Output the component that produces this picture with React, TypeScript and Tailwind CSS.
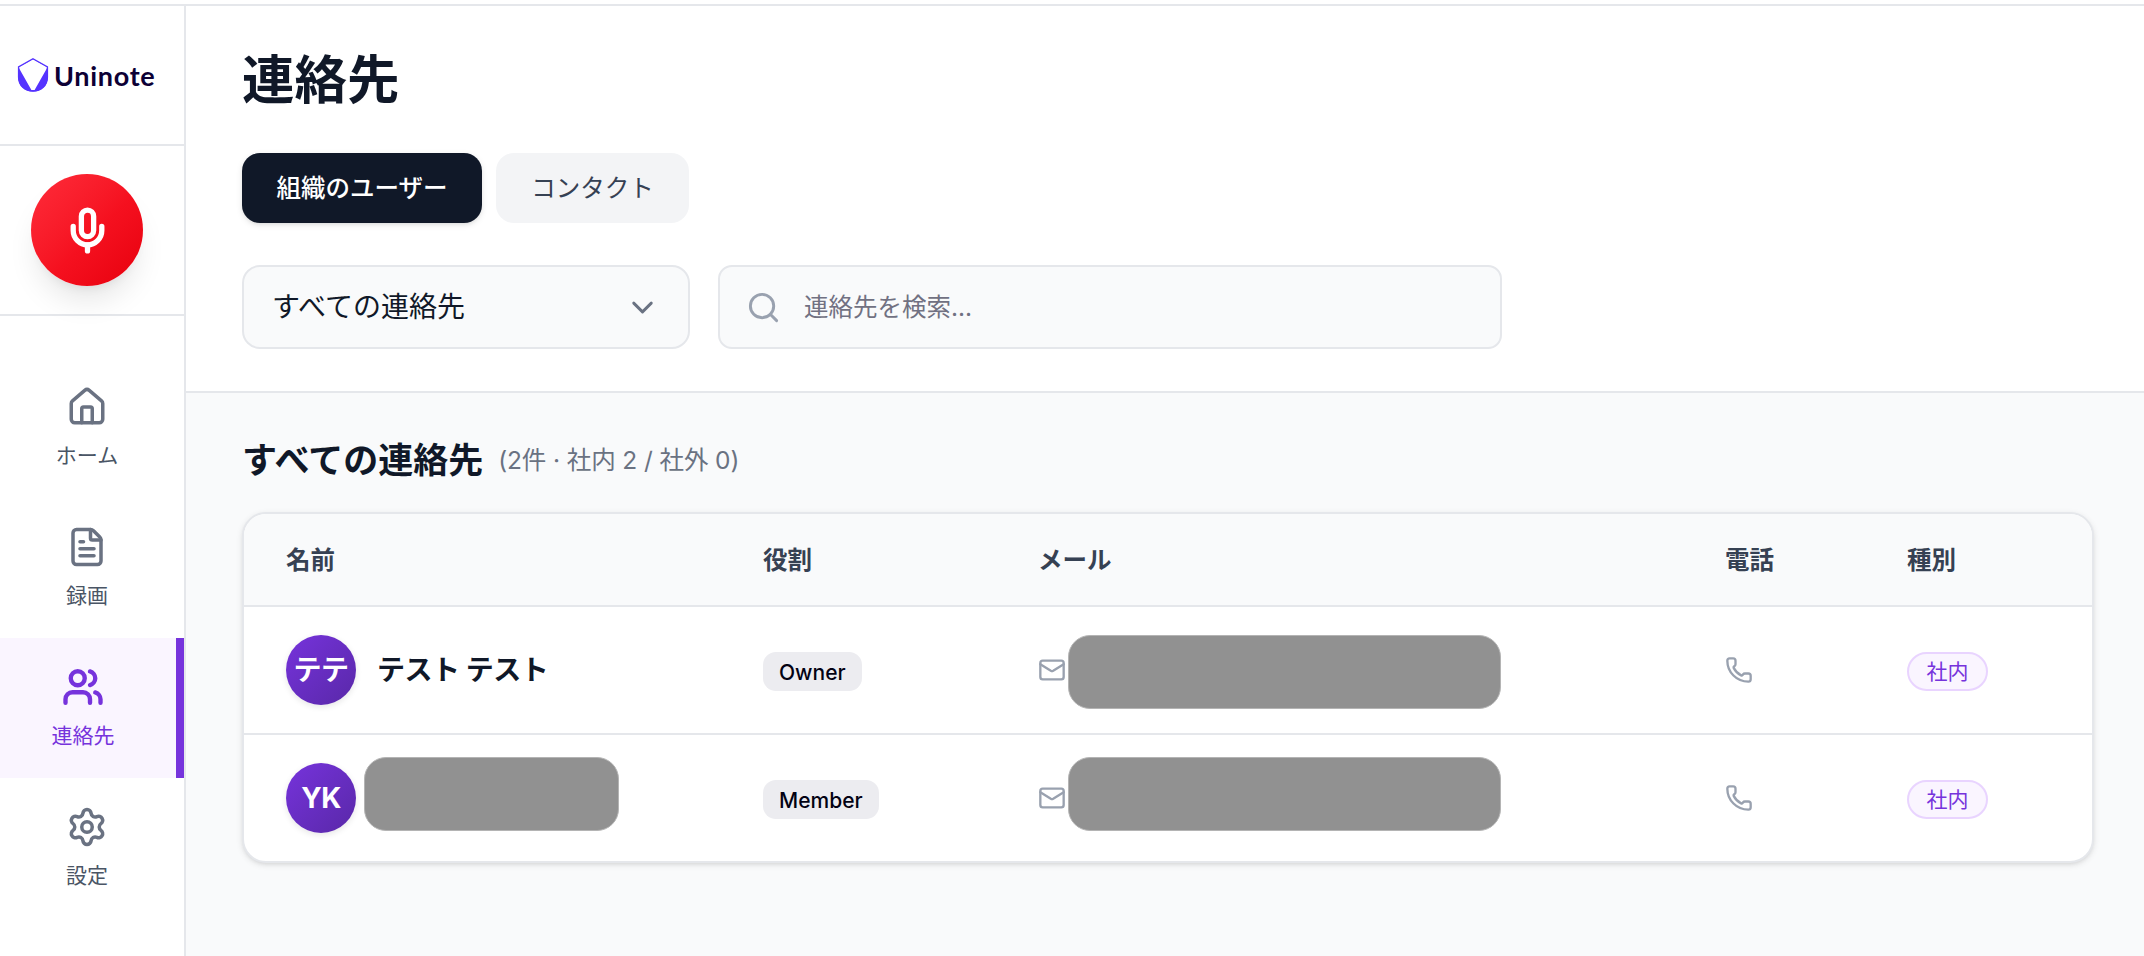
import { ChevronDown, FileText, House, Mail, Mic, Phone, Search, Settings, Users } from 'lucide-react'

const navItems = [
  { label: 'ホーム', icon: House },
  { label: '録画', icon: FileText },
  { label: '連絡先', icon: Users, active: true },
  { label: '設定', icon: Settings },
]

const contacts = [
  { id: 1, initials: 'テテ', name: 'テスト テスト', role: 'Owner', type: '社内' },
  { id: 2, initials: 'YK', name: null, role: 'Member', type: '社内' },
]

function Logo() {
  return (
    <div className="flex items-center gap-[5px]">
      <svg width="32" height="36" viewBox="0 0 32 36" fill="none">
        <path
          d="M16 1.8 L30.4 9.8 V20 C30.4 28.6 24 34 16 34 C8 34 1.6 28.6 1.6 20 V9.8 Z"
          stroke="#5533ff"
          strokeWidth="1.4"
        />
        <path d="M1.2 9.8 L14.4 33 H17.6 L30.8 9.8 V20 C30.8 28.8 24.2 34.6 16 34.6 C7.8 34.6 1.2 28.8 1.2 20 Z" fill="#5533ff" />
        <path d="M2.6 10.4 L14.6 32 C15.3 33 16.7 33 17.4 32 L29.4 10.4 L16 2.8 Z" fill="#fff" />
      </svg>
      <span className="pt-px font-[Lato] text-[27px] leading-9 font-bold tracking-[0.7px] text-[#0d0035]">Uninote</span>
    </div>
  )
}

function Sidebar() {
  return (
    <aside className="w-[186px] shrink-0 border-r-2 border-gray-200 bg-white">
      <div className="h-[140px] border-b-2 border-gray-200 flex items-center pl-[17px]">
        <Logo />
      </div>
      <div className="h-[170px] border-b-2 border-gray-200 flex items-center justify-center pr-[10px]">
        <button className="w-28 h-28 rounded-full flex items-center justify-center text-white bg-linear-to-br from-[#ff2b3a] via-[#f5101f] via-55% to-[#e7000b] shadow-[0_20px_30px_-6px_rgba(0,0,0,0.1),0_8px_12px_-8px_rgba(0,0,0,0.1)]">
          <Mic size={49} strokeWidth={2.6} />
        </button>
      </div>
      <nav className="pt-[42px]">
        {navItems.map(item => (
          <a
            key={item.label}
            className={`h-[140px] flex flex-col items-center justify-center gap-3.5 pr-[10px] ${
              item.active ? 'bg-purple-50 border-r-8 border-[#7633dc] text-[#7633dc]' : 'text-gray-600'
            }`}
          >
            <item.icon size={42} strokeWidth={item.active ? 2.5 : 2} className={item.active ? '' : 'text-gray-500'} />
            <span className="text-[21px] leading-7">{item.label}</span>
          </a>
        ))}
      </nav>
    </aside>
  )
}

// Covers a private value
function Redacted({ className }: { className: string }) {
  return <div className={`h-[74px] shrink-0 rounded-[22px] border border-[#b4b4b4] bg-[#919191] ${className}`} />
}

export default function App() {
  return (
    <div className="h-[956px] overflow-hidden bg-white pt-1 font-[Inter,'Noto_Sans_CJK_JP',sans-serif]">
      <div className="flex h-full border-t-2 border-gray-200">
        <Sidebar />

        <main className="flex-1 min-w-0 bg-gray-50">
          <header className="h-[387px] border-b-2 border-gray-200 bg-white px-14 pt-[42px]">
            <h1 className="h-[63px] pt-px text-[52.5px] leading-[63px] font-bold text-gray-900">連絡先</h1>

            <div className="mt-[42px] flex gap-3.5 text-[24.5px]">
              <button className="w-60 h-[70px] rounded-[18px] bg-gray-900 pt-px font-medium text-white shadow-[0_2px_6px_rgba(0,0,0,0.1),0_2px_4px_-2px_rgba(0,0,0,0.1)] whitespace-nowrap">
                組織のユーザー
              </button>
              <button className="w-[193px] h-[70px] rounded-[18px] bg-gray-100 pt-px text-gray-700">コンタクト</button>
            </div>

            <div className="mt-[42px] flex gap-7">
              <button className="w-[448px] h-[84px] flex items-center justify-between rounded-[18px] border-2 border-gray-200 bg-gray-50 px-7 text-[28px] text-gray-900">
                <span>すべての連絡先</span>
                <ChevronDown size={35} className="text-gray-500" />
              </button>
              <label className="w-[784px] h-[84px] flex items-center gap-[23px] rounded-[14px] border-2 border-gray-200 bg-gray-50 pl-[26px]">
                <Search size={35} className="text-gray-400" />
                <input
                  className="flex-1 pt-px text-[24.5px] outline-none placeholder:text-[#717182]"
                  placeholder="連絡先を検索..."
                />
              </label>
            </div>
          </header>

          <section className="pl-14 pr-[50px] pt-[42px]">
            <div className="flex items-center gap-[15px] h-[49px] pt-0.5">
              <h2 className="text-[35px] font-bold text-gray-900">すべての連絡先</h2>
              <span className="text-[24.5px] tracking-[-0.1px] text-gray-500">(2件 · 社内 2 / 社外 0)</span>
            </div>

            <div className="mt-7 overflow-hidden rounded-[24px] border-2 border-gray-200 bg-white shadow-[0_2px_6px_rgba(0,0,0,0.1),0_2px_4px_-2px_rgba(0,0,0,0.1)]">
              <div className="grid grid-cols-[477px_275px_687px_182px_1fr] h-[93px] items-center border-b-2 border-gray-200 bg-gray-50 pt-0.5 text-[24.5px] font-bold text-gray-700 *:pl-[42px]">
                <div>名前</div>
                <div>役割</div>
                <div>メール</div>
                <div>電話</div>
                <div>種別</div>
              </div>
              {contacts.map(contact => (
                <div
                  key={contact.id}
                  className="grid grid-cols-[477px_275px_687px_182px_1fr] h-32 items-center border-b-2 border-gray-200 last:h-[126px] last:border-b-0 *:pl-[42px]"
                >
                  <div className="flex items-center">
                    <div className="w-[70px] h-[70px] shrink-0 rounded-full flex items-center justify-center bg-linear-to-br from-[#7633dc] to-[#5928a8] text-[28px] tracking-[-0.5px] font-bold text-white shadow-[0_2px_6px_rgba(0,0,0,0.1)]">
                      {contact.initials}
                    </div>
                    {contact.name ? (
                      <span className="ml-[21px] text-[28px] tracking-[-0.5px] font-bold text-gray-900">{contact.name}</span>
                    ) : (
                      <Redacted className="ml-2 -mt-2 w-[255px]" />
                    )}
                  </div>
                  <div className="pt-[3px]">
                    <span className="inline-flex h-[39px] items-center rounded-[13px] bg-[#ececf0] px-4 pt-0.5 text-[21px] font-medium text-[#030213] align-middle">
                      {contact.role}
                    </span>
                  </div>
                  <div className="flex items-center">
                    <Mail size={28} className="shrink-0 text-gray-400" />
                    <Redacted className={contact.name ? 'ml-0.5 mt-1 w-[433px]' : 'ml-0.5 -mt-2 w-[433px]'} />
                  </div>
                  <div>
                    <Phone size={28} className="text-gray-400" />
                  </div>
                  <div className="pt-[3px]">
                    <span className="inline-flex w-[81px] h-[39px] items-center justify-center rounded-full border-2 border-purple-200 bg-purple-50 pt-px text-[21px] text-[#7633dc] align-middle">
                      {contact.type}
                    </span>
                  </div>
                </div>
              ))}
            </div>
          </section>
        </main>
      </div>
    </div>
  )
}
